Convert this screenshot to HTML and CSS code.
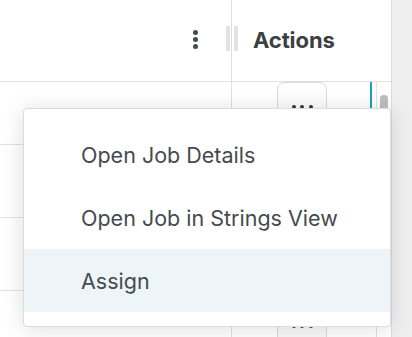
FILE: index.html
```html
<!DOCTYPE html>
<html lang="en">
<head>
<meta charset="utf-8">
<title>Jobs</title>
<link rel="stylesheet" href="styles.css">
</head>
<body>
<div class="app">
  <div class="grid">
    <div class="header">
      <div class="hcell main">
        <span class="kebab"><i></i><i></i><i></i></span>
        <span class="resizer"><i></i><i></i></span>
      </div>
      <div class="hcell actions">Actions</div>
    </div>
    <div class="body">
      <div class="rows">
        <div class="row first">
          <div class="cell main"></div>
          <div class="cell act">
            <button class="more"><i></i><i></i><i></i></button>
            <span class="focusbar"></span>
          </div>
        </div>
        <div class="row">
          <div class="cell main"></div>
          <div class="cell act"><button class="more"><i></i><i></i><i></i></button></div>
        </div>
        <div class="row">
          <div class="cell main"></div>
          <div class="cell act"><button class="more"><i></i><i></i><i></i></button></div>
        </div>
        <div class="row">
          <div class="cell main"></div>
          <div class="cell act"><button class="more"><i></i><i></i><i></i></button></div>
        </div>
      </div>
      <div class="track"><span class="thumb"></span></div>
    </div>
  </div>
  <div class="gutter"></div>

  <ul class="menu">
    <li>Open Job Details</li>
    <li>Open Job in Strings View</li>
    <li class="active">Assign</li>
  </ul>
</div>
</body>
</html>
```

FILE: styles.css
```css
* { box-sizing: border-box; }
html, body { margin: 0; padding: 0; }
body {
  font-family: "Inter", "Liberation Sans", sans-serif;
  color: #3f4548;
  background: #fff;
  width: 412px;
  height: 337px;
  overflow: hidden;
}
.app {
  position: relative;
  display: flex;
  height: 337px;
}
.grid {
  width: 392px;
  border-right: 1px solid #dcdcdc;
  display: flex;
  flex-direction: column;
}
.gutter {
  flex: 1;
  background: #efefef;
}
.header {
  display: flex;
  height: 82px;
  border-bottom: 1px solid #e2e2e2;
}
.hcell.main {
  width: 232px;
  border-right: 1px solid #dedede;
  display: flex;
  align-items: center;
  justify-content: flex-end;
  position: relative;
}
.kebab {
  display: flex;
  flex-direction: column;
  gap: 2px;
  margin-right: 33px;
  margin-top: -3px;
}
.kebab i {
  display: block;
  width: 5px;
  height: 5px;
  border-radius: 50%;
  background: #464b4e;
}
.resizer {
  position: absolute;
  right: -7px;
  top: 26px;
  width: 12px;
  height: 25px;
  display: flex;
  justify-content: space-between;
}
.resizer i {
  display: block;
  width: 4px;
  background: #e3e3e3;
}
.hcell.actions {
  flex: 1;
  display: flex;
  align-items: center;
  padding-left: 21px;
  padding-bottom: 1px;
  font-weight: 700;
  font-size: 22px;
  color: #3a4043;
  letter-spacing: -0.1px;
}
.body {
  flex: 1;
  display: flex;
  overflow: hidden;
}
.rows {
  width: 377px;
  margin-top: -10px;
}
.row {
  display: flex;
  height: 73px;
  border-bottom: 1px solid #e2e2e2;
}
.cell.main {
  width: 232px;
  border-right: 1px solid #e0e0e0;
}
.cell.act {
  flex: 1;
  position: relative;
  padding: 10px 0 0 45px;
}
.more {
  width: 50px;
  height: 50px;
  border: 1px solid #d8d8d8;
  border-radius: 7px;
  background: linear-gradient(#fff, #f6f6f6);
  display: flex;
  justify-content: center;
  gap: 4.5px;
  padding: 22px 0 0;
}
.more i {
  display: block;
  width: 4px;
  height: 4px;
  border-radius: 50%;
  background: #2f3436;
}
.focusbar {
  position: absolute;
  left: 138px;
  top: 0;
  width: 2px;
  height: 60px;
  background: #1a9ec2;
}
.track {
  width: 15px;
  border-left: 1px solid #e2e2e2;
  padding: 13px 0 0 3px;
}
.thumb {
  display: block;
  width: 8px;
  height: 80px;
  border-radius: 4px 4px 0 0;
  background: #bdbdbd;
}
.menu {
  position: absolute;
  left: 23px;
  top: 108px;
  width: 368px;
  height: 219px;
  margin: 0;
  padding: 14px 0 13px;
  list-style: none;
  background: #fff;
  border: 1px solid #dcdcdc;
  border-radius: 4px;
  box-shadow: 0 2px 22px rgba(0, 0, 0, 0.13);
}
.menu li {
  height: 63px;
  display: flex;
  align-items: center;
  padding-left: 57px;
  font-size: 21.5px;
  color: #454b4e;
}
.menu li.active {
  background: #eef5f8;
}
```
